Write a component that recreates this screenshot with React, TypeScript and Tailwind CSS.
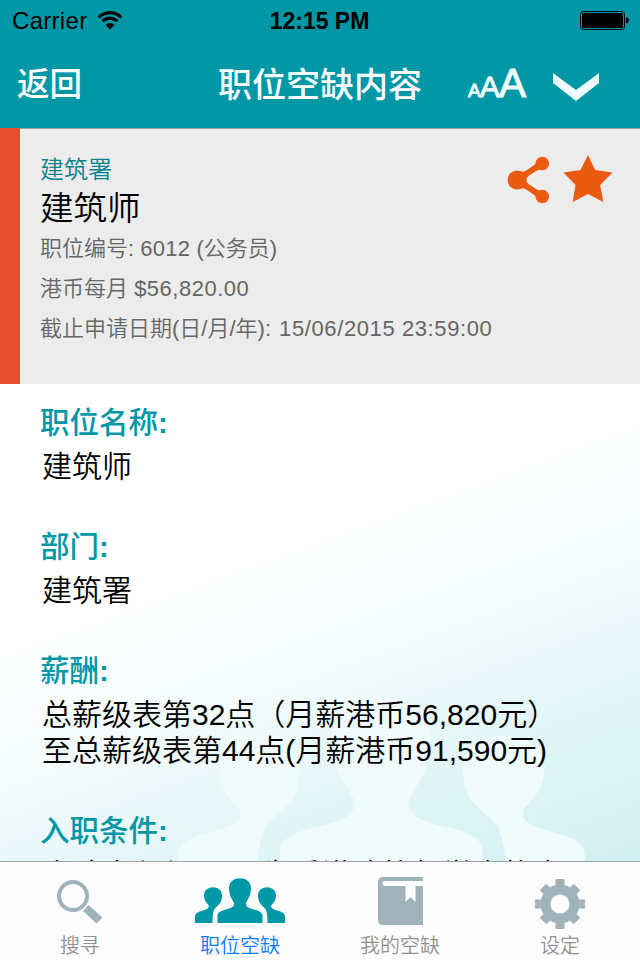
import type { ReactNode } from "react";

const sections = [
  { title: "职位名称", lines: ["建筑师"] },
  { title: "部门", lines: ["建筑署"] },
  { title: "薪酬", lines: ["总薪级表第32点（月薪港币56,820元）", "至总薪级表第44点(月薪港币91,590元)"] },
  { title: "入职条件", lines: ["申请人必须  (a)  为香港建筑师学会的会"] },
];

function WifiIcon() {
  return (
    <svg width="26" height="20" viewBox="0 0 26 20" fill="none" stroke="#000" strokeWidth="3">
      <path d="M1.6 6.3Q13 -3 24.4 6.3" />
      <path d="M5.4 10.2Q13 4 20.6 10.2" />
      <path d="M8.6 13.8Q13 10 17.4 13.8L13 18.5Z" fill="#000" stroke="none" />
    </svg>
  );
}

function BatteryIcon() {
  return (
    <svg width="50" height="20" viewBox="0 0 50 20">
      <rect x="0.5" y="0.5" width="44" height="18" rx="3" fill="none" stroke="#000" />
      <rect x="2" y="2" width="41" height="15" rx="1.5" />
      <path d="M46 6.3q3 1 3 3.2t-3 3.2z" />
    </svg>
  );
}

function ShareIcon() {
  return (
    <svg width="43" height="48" viewBox="0 0 43 48" fill="#eb5a11">
      <path d="M12 15Q16.5 17 20 14L30 7L35 13.5Q32 13 29 15L22 19.5Q16.5 24 22 28.5L29 33Q32 35 35 34.5L30 41L20 34Q16.5 31 12 33Z" />
      <circle cx="10" cy="24" r="9.5" />
      <circle cx="35.3" cy="7.5" r="6.8" />
      <circle cx="35.3" cy="40.5" r="6.8" />
    </svg>
  );
}

function StarIcon() {
  return (
    <svg width="50" height="48" viewBox="0 0 50 48" fill="#eb5a11">
      <path d="M25 0L32.2 15L49.5 17.5L37.2 30L40.3 47L25 39L9.7 47L12.5 30L.5 17.5L17.5 15Z" />
    </svg>
  );
}

function PeopleIcon({ className }: { className?: string }) {
  return (
    <svg className={className} viewBox="0 0 90 45" preserveAspectRatio="none" fill="currentColor">
      <path d="M34 10C34-3 56-3 56 10C56 17 53 21 51 25C50.5 29 54 30 58 31.2C64 32.7 67.5 34 67.5 38V45H22.5V38C22.5 34 26 32.7 32 31.2C36 30 39.5 29 39 25C37 21 34 17 34 10Z" />
      <path d="M9 17.5C9 6.5 27 6.5 27 17.5C27 22.5 25.5 25 22.5 28C19.5 30.5 17.5 32 17.5 45H0V39C0 35 3 34 8 32.5C12.5 31 14.5 30 13.5 27C10.5 24 9 21 9 17.5Z" />
      <path d="M81 17.5C81 6.5 63 6.5 63 17.5C63 22.5 64.5 25 67.5 28C70.5 30.5 72.5 32 72.5 45H90V39C90 35 87 34 82 32.5C77.5 31 75.5 30 76.5 27C79.5 24 81 21 81 17.5Z" />
    </svg>
  );
}

function SearchIcon() {
  return (
    <svg width="46" height="44" viewBox="0 0 46 44">
      <circle cx="16" cy="16" r="14" fill="none" stroke="#a0b3bb" strokeWidth="4" />
      <path d="M31.5 25L45.5 37.5L39.5 43.5L26 31Z" fill="#a0b3bb" />
    </svg>
  );
}

function BookIcon() {
  return (
    <svg width="45" height="48" viewBox="0 0 45 48" fill="#a0b3bb">
      <path d="M5 0H45V4H7Q4.5 4 4.5 6.5Q4.5 9 7 9H27.5V25L32.5 20L37.5 25V9H45V48H5Q0 48 0 43V5Q0 0 5 0Z" />
    </svg>
  );
}

function GearIcon() {
  return (
    <svg width="50" height="50" viewBox="0 0 50 50">
      <g fill="#a0b3bb">
        <path d="M20.5 0H29.5V50H20.5Z" />
        <path d="M0 20.5H50V29.5H0Z" />
        <path d="M20.5 1H29.5V49H20.5Z" transform="rotate(45 25 25)" />
        <path d="M20.5 1H29.5V49H20.5Z" transform="rotate(-45 25 25)" />
        <circle cx="25" cy="25" r="19.5" />
      </g>
      <circle cx="25" cy="25" r="9.5" fill="#fff" />
    </svg>
  );
}

function Tab({ label, active, children }: { label: string; active?: boolean; children: ReactNode }) {
  return (
    <div className={active ? "flex flex-col text-[#087cff]" : "flex flex-col text-[#929292]"}>
      <div className="flex h-[69px] items-end justify-center">{children}</div>
      <span className="pt-px text-center text-[20px] font-[350] leading-[29px]">{label}</span>
    </div>
  );
}

export default function App() {
  return (
    <div className="flex h-[960px] w-[640px] flex-col overflow-hidden bg-white font-['Liberation_Sans','Noto_Sans_CJK_SC',sans-serif]">
      <header className="h-32 shrink-0 bg-[#0097a7]">
        <div className="grid h-10 grid-cols-[1fr_auto_1fr] items-center pl-3 pr-[10px] pt-[2px]">
          <div className="flex items-center gap-[10px] text-[24px] leading-[38px] tracking-[0.3px] text-black">
            <span>Carrier</span>
            <WifiIcon />
          </div>
          <span className="-ml-[3px] text-center text-[23px] font-bold">12:15 PM</span>
          <div className="flex justify-end"><BatteryIcon /></div>
        </div>
        <div className="flex h-[88px] items-center pl-[17px] pt-[3px] text-white">
          <span className="w-[201px] text-[32.5px] font-medium leading-[85px]">返回</span>
          <h1 className="w-[250px] text-[34px] font-medium leading-[85px]">职位空缺内容</h1>
          <div className="flex w-[85px] items-baseline pb-[3px] text-[#effcff] [-webkit-text-stroke:1px_#effcff]">
            <span className="text-[19px]">A</span>
            <span className="-ml-px text-[30px]">A</span>
            <span className="-ml-px text-[41px]">A</span>
          </div>
          <svg className="mt-0.5" width="46" height="28" viewBox="0 0 46 28" fill="#effcff">
            <path d="M0 0L23 17L46 0V10L23 28L0 10Z" />
          </svg>
        </div>
      </header>

      <section className="flex h-64 shrink-0 justify-between border-l-[20px] border-[#e94e2f] bg-[#ececec] pl-5 pr-[27px] font-[350] shadow-[inset_0_1px_0_#a0a0a0]">
        <div className="pt-[22px] text-[22px] leading-10 text-[#666]">
          <p className="text-[24px] text-[#07838e]">建筑署</p>
          <h2 className="-mt-px text-[33.5px] text-black">建筑师</h2>
          <p>职位编号: <span className="tracking-[0.3px]">6012</span> (公务员)</p>
          <p>港币每月 <span className="tracking-[0.5px]">$56,820.00</span></p>
          <p>截止申请日期(日/月/年): <span className="ml-0.5 tracking-[0.6px]">15/06/2015 23:59:00</span></p>
        </div>
        <div className="flex gap-[13px] pt-[27px]">
          <div className="pt-px"><ShareIcon /></div>
          <StarIcon />
        </div>
      </section>

      <main className="relative h-[477px] shrink-0 overflow-hidden bg-[linear-gradient(160deg,#fff_36%,#f5fcfd_55%,#e1f5f6_78%,#d2f0f1_100%)]">
        <PeopleIcon className="absolute left-[178px] top-[314px] h-[184px] w-[407px] text-[#f0fbfc]" />
        <div className="relative pl-10 pt-[19px]">
          {sections.map((s) => (
            <section key={s.title} className="mb-[43px]">
              <h3 className="text-[29.5px] font-medium leading-[40px] text-[#0097a7]">
                {s.title}<span className="font-bold">:</span>
              </h3>
              <div className="ml-0.5 mt-[6px] text-[30px] font-[350] leading-[36px] text-black last:-mb-px">
                {s.lines.map((line) => <p key={line} className="whitespace-pre">{line}</p>)}
              </div>
            </section>
          ))}
        </div>
      </main>

      <nav className="grid h-[99px] shrink-0 grid-cols-4 border-t border-[#9ca6a7] bg-[#fdfdfd]">
        <Tab label="搜寻"><div className="pb-[7px]"><SearchIcon /></div></Tab>
        <Tab label="职位空缺" active><div className="pb-2"><PeopleIcon className="h-[45px] w-[90px] text-[#0097a7]" /></div></Tab>
        <Tab label="我的空缺"><div className="pb-[6px]"><BookIcon /></div></Tab>
        <Tab label="设定"><div className="pb-0.5"><GearIcon /></div></Tab>
      </nav>
    </div>
  );
}
